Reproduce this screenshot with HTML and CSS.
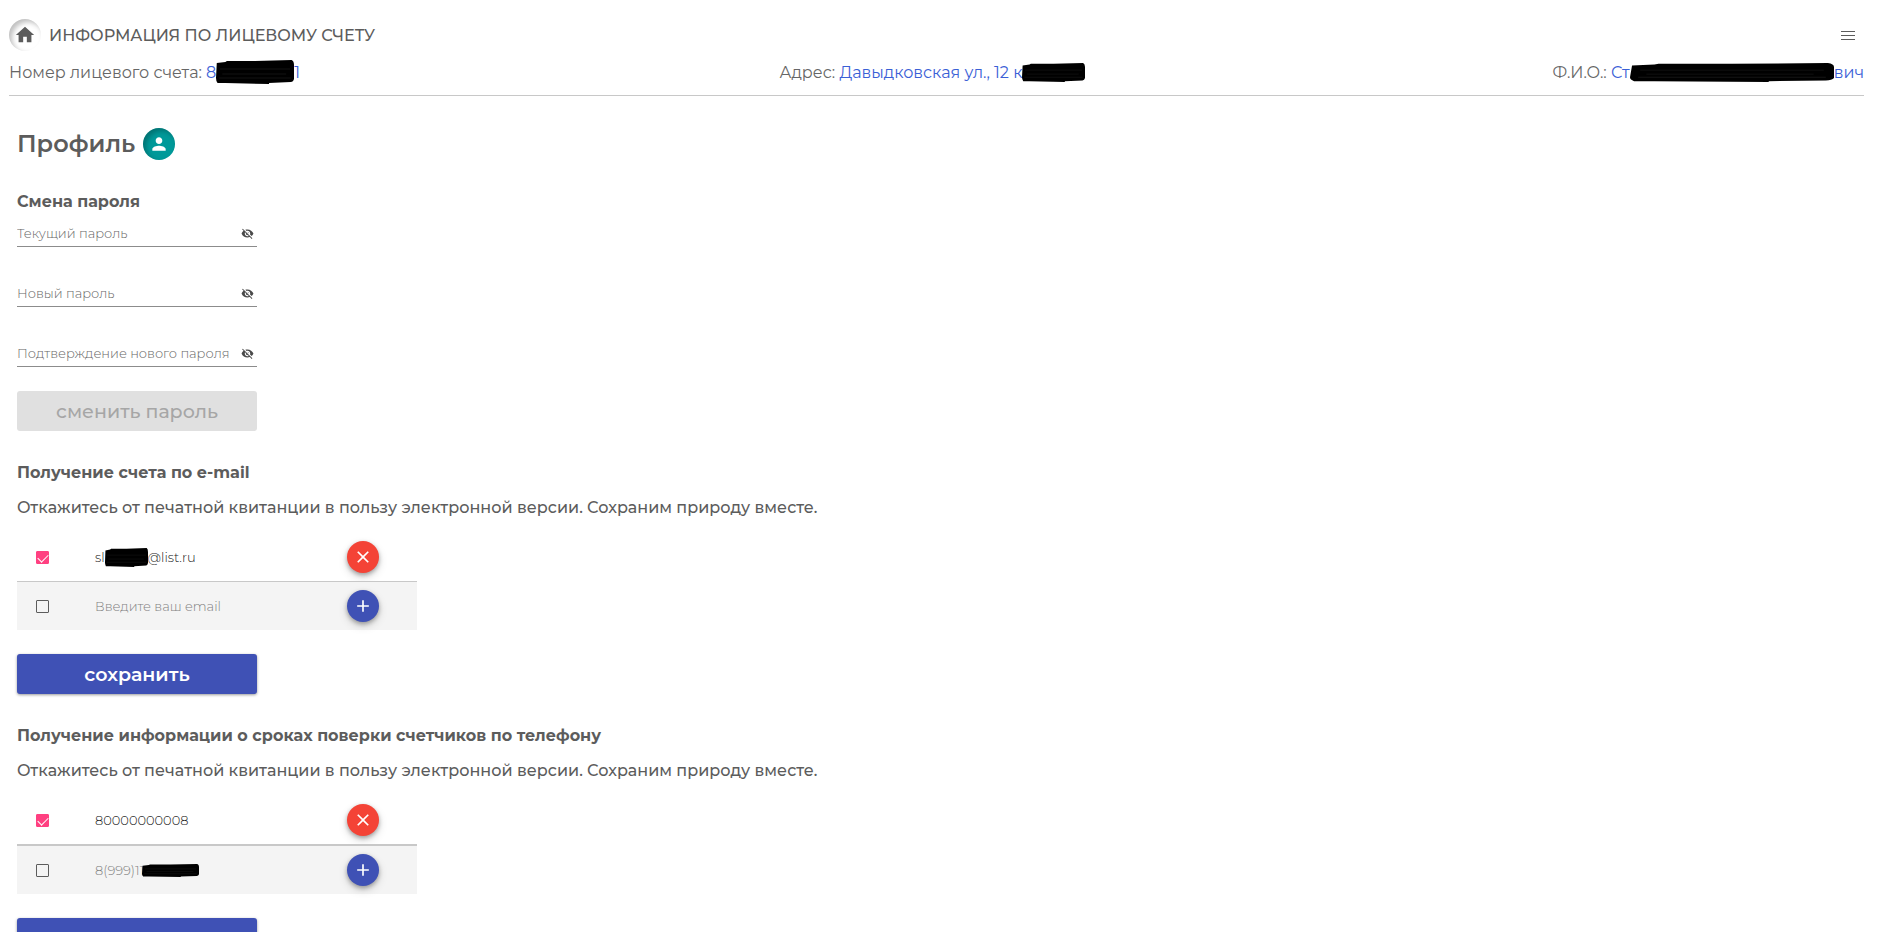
FILE: index.html
```html
<!DOCTYPE html>
<html lang="ru">
<head>
    <meta charset="UTF-8">
    <meta name="viewport" content="width=device-width, initial-scale=1.0">
    <title>Профиль</title>
    <link rel="stylesheet" href="styles.css">
</head>
<body>
    <svg class="sprite" aria-hidden="true">
        <symbol id="eye-off" viewBox="0 0 24 24">
            <path d="M12 7c2.76 0 5 2.24 5 5 0 .65-.13 1.26-.36 1.83l2.92 2.92c1.51-1.26 2.7-2.89 3.43-4.75-1.73-4.39-6-7.5-11-7.5-1.4 0-2.74.25-3.98.7l2.16 2.16C10.74 7.13 11.35 7 12 7zM2 4.27l2.28 2.28.46.46C3.08 8.3 1.78 10.02 1 12c1.73 4.39 6 7.5 11 7.5 1.55 0 3.03-.3 4.38-.84l.42.42L19.73 22 21 20.73 3.27 3 2 4.27zM7.53 9.8l1.55 1.55c-.05.21-.08.43-.08.65 0 1.66 1.34 3 3 3 .22 0 .44-.03.65-.08l1.55 1.55c-.67.33-1.41.53-2.2.53-2.76 0-5-2.24-5-5 0-.79.2-1.53.53-2.2zm4.31-.78l3.15 3.15.02-.16c0-1.66-1.34-3-3-3l-.17.01z"/>
        </symbol>
        <symbol id="close" viewBox="0 0 24 24">
            <path d="M19 6.41L17.59 5 12 10.59 6.41 5 5 6.41 10.59 12 5 17.59 6.41 19 12 13.41 17.59 19 19 17.59 13.41 12z"/>
        </symbol>
        <symbol id="add" viewBox="0 0 24 24">
            <path d="M19 13h-6v6h-2v-6H5v-2h6V5h2v6h6v2z"/>
        </symbol>
        <symbol id="marker" viewBox="0 0 100 24" preserveAspectRatio="none">
            <path d="M1 3 L12 2 L14 1 L50 1 L97 0 Q100 1 100 5 L100 19 Q99 22 96 22 L68 23 L68 24 L12 23 L2 23 Q0 21 0 18 Z" fill="#000"/>
            <path d="M5 9 H95 M8 14 H90 M4 18 H96" stroke="#141414" stroke-width="1" fill="none"/>
        </symbol>
    </svg>

    <header class="header">
        <div class="header-top">
            <a class="home" href="#" aria-label="На главную">
                <svg viewBox="0 0 24 24"><path d="M10 20v-6h4v6h5v-8h3L12 3 2 12h3v8z"/></svg>
            </a>
            <span class="header-title">ИНФОРМАЦИЯ ПО ЛИЦЕВОМУ СЧЕТУ</span>
            <button class="menu" type="button" aria-label="Меню">
                <svg viewBox="0 0 14 9"><path d="M0 0h14v1H0zM0 4h14v1H0zM0 8h14v1H0z"/></svg>
            </button>
        </div>
        <div class="account">
            <div>Номер лицевого счета: <span class="value">8<svg class="marker marker-number"><use href="#marker"/></svg>1</span></div>
            <div class="address">Адрес: <span class="value">Давыдковская ул., 12 к<svg class="marker marker-address"><use href="#marker"/></svg></span></div>
            <div class="owner">Ф.И.О.: <span class="value">Ст<svg class="marker marker-owner"><use href="#marker"/></svg>вич</span></div>
        </div>
    </header>

    <main class="content">
        <div class="page-title">
            <h1>Профиль</h1>
            <span class="avatar">
                <svg viewBox="0 0 24 24"><path d="M12 12c2.21 0 4-1.79 4-4s-1.79-4-4-4-4 1.79-4 4 1.79 4 4 4zm0 2c-2.67 0-8 1.34-8 4v2h16v-2c0-2.66-5.33-4-8-4z"/></svg>
            </span>
        </div>

        <form class="section passwords">
            <h2>Смена пароля</h2>
            <div class="field">
                <input type="password" placeholder="Текущий пароль" aria-label="Текущий пароль">
                <button class="eye" type="button" aria-label="Показать пароль"><svg><use href="#eye-off"/></svg></button>
            </div>
            <div class="field">
                <input type="password" placeholder="Новый пароль" aria-label="Новый пароль">
                <button class="eye" type="button" aria-label="Показать пароль"><svg><use href="#eye-off"/></svg></button>
            </div>
            <div class="field">
                <input type="password" placeholder="Подтверждение нового пароля" aria-label="Подтверждение нового пароля">
                <button class="eye" type="button" aria-label="Показать пароль"><svg><use href="#eye-off"/></svg></button>
            </div>
            <button class="btn" type="submit" disabled>сменить пароль</button>
        </form>

        <form class="section">
            <h2>Получение счета по e-mail</h2>
            <p>Откажитесь от печатной квитанции в пользу электронной версии. Сохраним природу вместе.</p>
            <table class="contacts">
                <tr>
                    <td class="check"><input type="checkbox" aria-label="Получать счет" checked></td>
                    <td class="contact">sl<svg class="marker marker-email"><use href="#marker"/></svg>@list.ru</td>
                    <td><button class="fab fab-remove" type="button" aria-label="Удалить"><svg><use href="#close"/></svg></button></td>
                </tr>
                <tr class="new">
                    <td class="check"><input type="checkbox" aria-label="Получать счет"></td>
                    <td class="contact"><input type="email" placeholder="Введите ваш email" aria-label="Email"></td>
                    <td><button class="fab" type="button" aria-label="Добавить"><svg><use href="#add"/></svg></button></td>
                </tr>
            </table>
            <button class="btn" type="submit">сохранить</button>
        </form>

        <form class="section">
            <h2>Получение информации о сроках поверки счетчиков по телефону</h2>
            <p>Откажитесь от печатной квитанции в пользу электронной версии. Сохраним природу вместе.</p>
            <table class="contacts phones">
                <tr>
                    <td class="check"><input type="checkbox" aria-label="Получать информацию" checked></td>
                    <td class="contact">80000000008</td>
                    <td><button class="fab fab-remove" type="button" aria-label="Удалить"><svg><use href="#close"/></svg></button></td>
                </tr>
                <tr class="new">
                    <td class="check"><input type="checkbox" aria-label="Получать информацию"></td>
                    <td class="contact">
                        <div class="phone">
                            <input type="tel" placeholder="8(999)11" aria-label="Телефон">
                            <svg class="marker marker-phone"><use href="#marker"/></svg>
                        </div>
                    </td>
                    <td><button class="fab" type="button" aria-label="Добавить"><svg><use href="#add"/></svg></button></td>
                </tr>
            </table>
            <button class="btn" type="submit">сохранить</button>
        </form>
    </main>
</body>
</html>
```

FILE: styles.css
```css
* {
    box-sizing: border-box;
}
body {
    margin: 0;
    font-family: Montserrat, Inter, sans-serif;
    font-size: 16px;
    line-height: 26px;
    color: #5c5c5c;
    background-color: #fff;
}
/* the page scrolls without a visible scrollbar */
html {
    scrollbar-width: none;
}
h1, h2, p {
    margin: 0;
}
button, input {
    font-family: inherit;
}
button {
    padding: 0;
    border: none;
    cursor: pointer;
}
svg {
    fill: currentColor;
}
.sprite {
    display: none;
}

/* header */
.header {
    margin: 0 19px 0 9px;
    padding-top: 19px;
    border-bottom: 1px solid #c8c8c8;
}
.header-top {
    display: flex;
    align-items: center;
    gap: 8px;
}
.home {
    display: flex;
    align-items: center;
    justify-content: center;
    width: 32px;
    height: 32px;
    border-radius: 50%;
    box-shadow: inset 3px 3px 5px rgba(0, 0, 0, 0.25);
    color: #5c5c5c;
}
.home svg {
    width: 22px;
    height: 22px;
}
.header-title {
    padding-top: 2px;
    font-weight: 500;
}
.menu {
    margin-left: auto;
    padding: 4px 9px;
    background: none;
    color: #5c5c5c;
}
.menu svg {
    display: block;
    width: 14px;
    height: 9px;
}
.account {
    display: grid;
    grid-template-columns: 1fr auto 1fr;
    padding: 9px 0;
    color: #666;
    white-space: nowrap;
}
.address {
    padding-right: 8px;
}
.owner {
    text-align: right;
}
.value {
    color: #3a60d6;
}

/* painted-over private data */
.marker {
    height: 19px;
    margin-top: 3px;
    vertical-align: top;
}
.marker-number {
    width: 78px;
    height: 24px;
    margin-top: 0;
}
.marker-address {
    width: 63px;
}
.marker-owner {
    width: 204px;
}
.marker-email {
    width: 43px;
}
.marker-phone {
    position: absolute;
    left: 47px;
    top: 3px;
    width: 57px;
    height: 13px;
}

/* content */
.content {
    padding: 32px 17px;
}
.page-title {
    display: flex;
    align-items: center;
    gap: 8px;
}
h1 {
    font-size: 24px;
    font-weight: 600;
    line-height: 32px;
}
.avatar {
    display: flex;
    align-items: center;
    justify-content: center;
    width: 32px;
    height: 32px;
    border-radius: 50%;
    background-color: #009999;
    box-shadow: inset 3px 3px 5px rgba(0, 0, 0, 0.25);
    color: #fff;
}
.avatar svg {
    width: 20px;
    height: 20px;
}
.section {
    margin-top: 29px;
}
h2 {
    font-size: 16px;
    font-weight: 700;
}
.section p {
    margin-top: 9px;
    font-weight: 500;
}
.field {
    display: flex;
    align-items: center;
    width: 240px;
    height: 25px;
    margin-top: 35px;
    border-bottom: 1px solid #8c8c8c;
}
h2 + .field {
    margin-top: 7px;
}
.field input,
.contact input {
    width: 100%;
    min-width: 0;
    padding: 0;
    border: none;
    outline: none;
    background: none;
    font-size: 13px;
    font-weight: 300;
    color: #222;
}
.field input {
    padding-bottom: 2px;
}
.field input::placeholder {
    color: #666;
}
.eye {
    margin-right: 3px;
    padding-bottom: 1px;
    background: none;
    color: #4a4a4a;
}
.eye svg {
    display: block;
    width: 13px;
    height: 13px;
}
.btn {
    display: block;
    width: 240px;
    height: 40px;
    margin-top: 24px;
    border-radius: 3px;
    background-color: #3f51b5;
    box-shadow: 0 1px 3px rgba(0, 0, 0, 0.4);
    font-size: 19px;
    font-weight: 600;
    color: #fff;
}
.btn:disabled {
    background-color: #e0e0e0;
    box-shadow: none;
    font-weight: 500;
    color: #a6a6a6;
    cursor: default;
}

/* tables of contacts */
.contacts {
    width: 400px;
    margin-top: 12px;
    border-spacing: 0;
    table-layout: fixed;
}
.contacts td {
    height: 48px;
    padding: 0;
}
.new td {
    height: 49px;
    border-top: 1px solid #c8c8c8;
    background-color: #f4f4f4;
}
.phones .new td {
    height: 50px;
    border-top-width: 2px;
}
.contacts .check {
    width: 78px;
    padding-left: 19px;
}
.contact {
    width: 252px;
    font-size: 13px;
    font-weight: 300;
    line-height: 24px;
    color: #222;
}
.contact input::placeholder {
    color: #808080;
}
.phone {
    position: relative;
    width: 200px;
}
.check input {
    appearance: none;
    display: block;
    width: 13px;
    height: 13px;
    margin: 1px 0 0;
    border: 1px solid #5c5c5c;
    border-radius: 1px;
}
.check input:checked {
    border-color: #ff4081;
    background-color: #ff4081;
}
.check input:checked::before {
    content: "";
    display: block;
    width: 9px;
    height: 5px;
    margin: 2px 0 0 1px;
    border: solid #fff;
    border-width: 0 0 1px 1px;
    transform: rotate(-45deg);
}
.fab {
    display: flex;
    align-items: center;
    justify-content: center;
    width: 32px;
    height: 32px;
    border-radius: 50%;
    background-color: #3f51b5;
    box-shadow: 0 2px 4px rgba(0, 0, 0, 0.3), 0 4px 10px rgba(0, 0, 0, 0.15);
    color: #fff;
}
.fab-remove {
    background-color: #f44336;
}
.fab svg {
    width: 20px;
    height: 20px;
}
```
